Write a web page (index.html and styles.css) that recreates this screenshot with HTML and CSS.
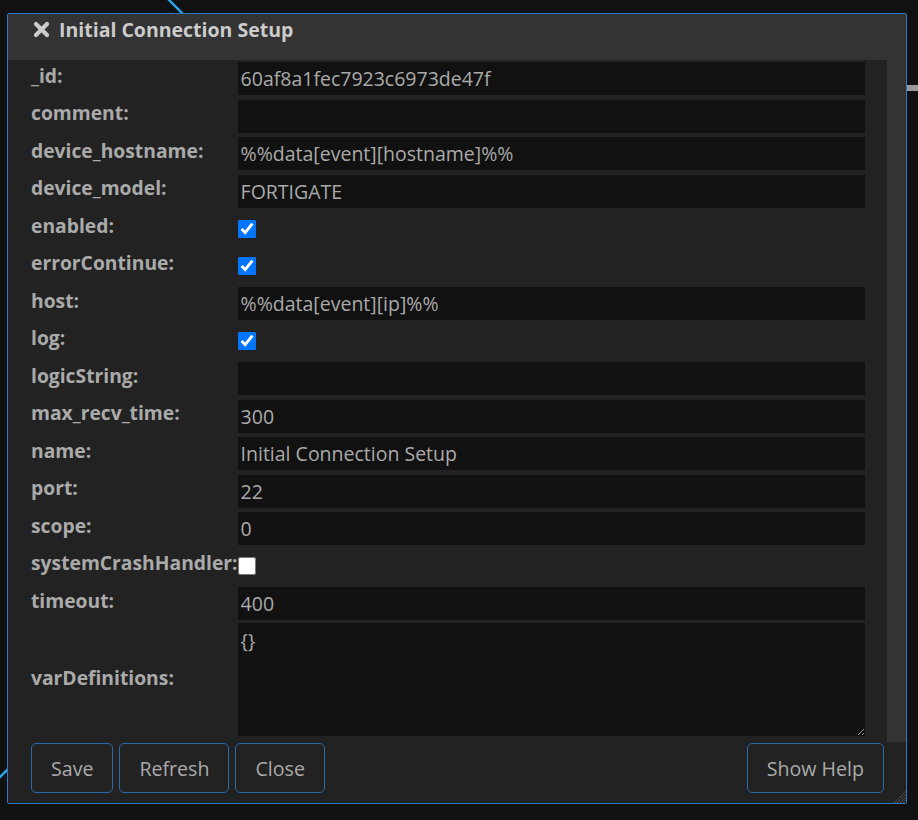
FILE: index.html
```html
<!DOCTYPE html>
<html lang="en">
<head>
<meta charset="utf-8">
<title>Initial Connection Setup</title>
<link rel="stylesheet" href="styles.css">
</head>
<body>
<svg class="canvas-lines" width="918" height="820" viewBox="0 0 918 820">
  <line x1="168" y1="-1" x2="195" y2="26" stroke="#29a6ee" stroke-width="2.4"/>
  <line x1="-2" y1="779" x2="22" y2="755" stroke="#29a6ee" stroke-width="2.4"/>
</svg>
<div class="node-stub"></div>
<div class="dialog">
  <div class="titlebar">
    <svg class="close-icon" width="17" height="17" viewBox="0 0 17 17">
      <path d="M3 3 L14 14 M14 3 L3 14" stroke="#cccccc" stroke-width="4.2" stroke-linecap="round"/>
    </svg>
    <span class="title">Initial Connection Setup</span>
  </div>
  <div class="body-wrap">
    <div class="form">
      <label class="lbl">_id:</label><div class="val"><input class="txt" type="text" value="60af8a1fec7923c6973de47f"></div>
      <label class="lbl">comment:</label><div class="val"><input class="txt" type="text" value=""></div>
      <label class="lbl">device_hostname:</label><div class="val"><input class="txt" type="text" value="%%data[event][hostname]%%"></div>
      <label class="lbl">device_model:</label><div class="val"><input class="txt" type="text" value="FORTIGATE"></div>
      <label class="lbl">enabled:</label><div class="val chk-cell"><input class="chk" type="checkbox" checked></div>
      <label class="lbl">errorContinue:</label><div class="val chk-cell"><input class="chk" type="checkbox" checked></div>
      <label class="lbl">host:</label><div class="val"><input class="txt" type="text" value="%%data[event][ip]%%"></div>
      <label class="lbl">log:</label><div class="val chk-cell"><input class="chk" type="checkbox" checked></div>
      <label class="lbl">logicString:</label><div class="val"><input class="txt" type="text" value=""></div>
      <label class="lbl">max_recv_time:</label><div class="val"><input class="txt" type="text" value="300"></div>
      <label class="lbl">name:</label><div class="val"><input class="txt" type="text" value="Initial Connection Setup"></div>
      <label class="lbl">port:</label><div class="val"><input class="txt" type="text" value="22"></div>
      <label class="lbl">scope:</label><div class="val"><input class="txt" type="text" value="0"></div>
      <label class="lbl">systemCrashHandler:</label><div class="val chk-cell"><input class="chk" type="checkbox"></div>
      <label class="lbl">timeout:</label><div class="val"><input class="txt" type="text" value="400"></div>
      <label class="lbl lbl-tall">varDefinitions:</label><div class="val val-tall"><textarea class="area">{}</textarea></div>
    </div>
  </div>
  <div class="footer">
    <div class="btn-group">
      <button class="btn" type="button">Save</button>
      <button class="btn" type="button">Refresh</button>
      <button class="btn" type="button">Close</button>
    </div>
    <button class="btn" type="button">Show Help</button>
  </div>
  <svg class="grip" width="13" height="13" viewBox="0 0 13 13">
    <path d="M13 1 L1 13 M13 4 L4 13 M13 7 L7 13 M13 10 L10 13" stroke="#4a4a4a" stroke-width="1"/>
  </svg>
</div>
</body>
</html>
```
FILE: styles.css
```css
html, body {
  margin: 0;
  padding: 0;
  background: #111111;
}

body {
  position: relative;
  width: 918px;
  height: 820px;
  overflow: hidden;
  font-family: "Open Sans", "DejaVu Sans", sans-serif;
}

.canvas-lines {
  position: absolute;
  left: 0;
  top: 0;
}

.node-stub {
  position: absolute;
  left: 907px;
  top: 85px;
  width: 11px;
  height: 6px;
  background: #9a9a9a;
}

.dialog {
  position: relative;
  margin: 13px 0 0 7px;
  width: 900px;
  height: 791px;
  box-sizing: border-box;
  border: 1px solid #2f79c2;
  border-radius: 2px;
  background: #333333;
  display: flex;
  flex-direction: column;
}

.titlebar {
  height: 46px;
  display: flex;
  align-items: center;
  padding: 0 0 15px 25px;
  box-sizing: border-box;
  gap: 9px;
}

.close-icon {
  display: block;
  flex: none;
}

.title {
  color: #cccccc;
  font-weight: bold;
  font-size: 19.5px;
}

.body-wrap {
  height: 682px;
  margin-right: 19px;
  background: #222222;
}

.form {
  display: grid;
  grid-template-columns: max-content 1fr;
  grid-template-rows: repeat(15, 37.5px) 120px;
  padding: 0 22px 0 23px;
}

.lbl {
  align-self: center;
  color: #aaaaaa;
  font-weight: bold;
  font-size: 19.3px;
  padding-bottom: 7px;
}

.lbl-tall {
  padding-bottom: 10px;
}

.val {
  display: flex;
  align-items: flex-start;
}

.chk-cell {
  align-items: center;
}

.txt {
  width: 100%;
  height: 33px;
  margin-top: 2px;
  box-sizing: border-box;
  border: none;
  outline: none;
  background: #111111;
  color: #aaaaaa;
  font-family: "Open Sans", "DejaVu Sans", sans-serif;
  font-size: 19.5px;
  padding: 0 3px;
}

.chk {
  width: 18px;
  height: 18px;
  margin: 0;
}

.area {
  width: 100%;
  height: 113px;
  box-sizing: border-box;
  border: none;
  outline: none;
  background: #111111;
  color: #aaaaaa;
  font-family: "Open Sans", "DejaVu Sans", sans-serif;
  font-size: 19.5px;
  padding: 4px 3px;
  color-scheme: dark;
  resize: vertical;
}

.footer {
  flex: 1;
  background: #222222;
  display: flex;
  justify-content: space-between;
  align-items: flex-start;
  padding: 1px 22px 0 23px;
}

.btn-group {
  display: flex;
  gap: 6px;
}

.btn {
  height: 50px;
  padding: 0 19px;
  background: #222222;
  border: 1px solid #2a6aa6;
  border-radius: 5px;
  color: #aaaaaa;
  font-family: "Open Sans", "DejaVu Sans", sans-serif;
  font-size: 19.6px;
}

.grip {
  position: absolute;
  right: 0;
  bottom: 0;
}
```
